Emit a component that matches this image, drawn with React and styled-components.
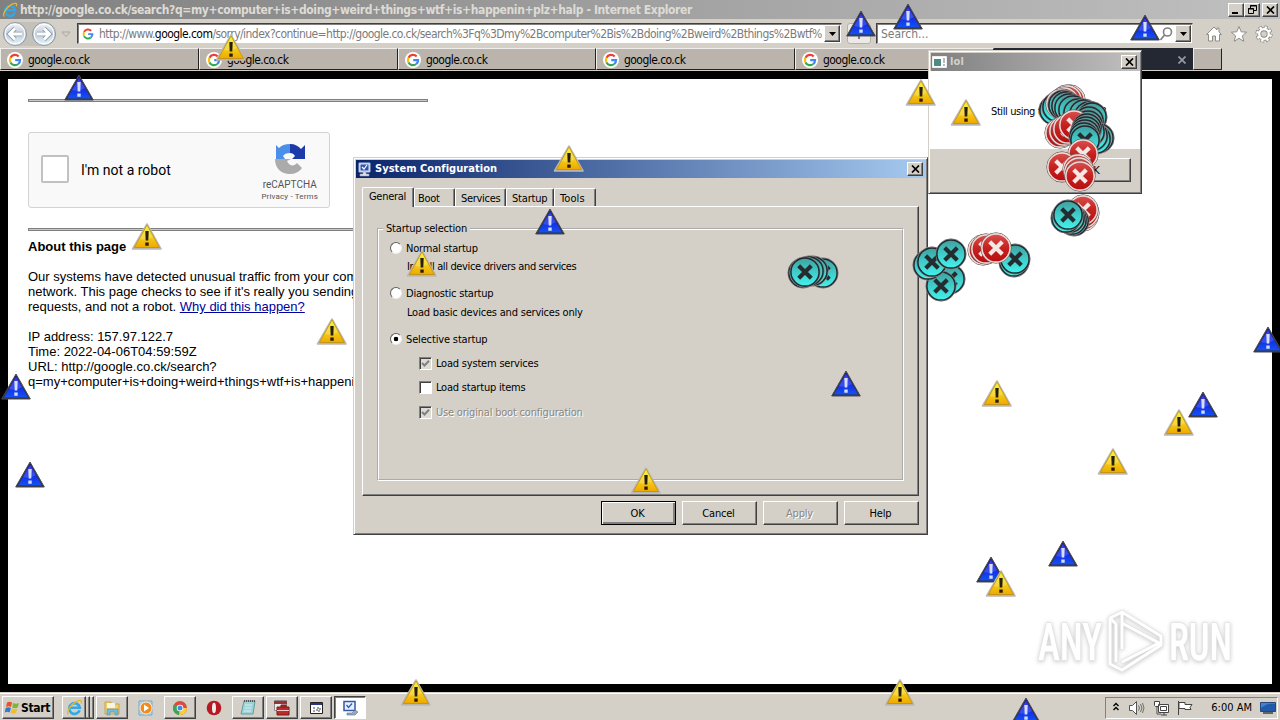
import styled, { createGlobalStyle, css } from "styled-components"

const GlobalStyle = createGlobalStyle`
  * { box-sizing: border-box; }
  body { margin: 0; overflow: hidden; }
  svg { flex: none; }
`

const ui = `"DejaVu Sans Condensed", "DejaVu Sans", sans-serif`

const raised = css`
  background: #d4d0c8;
  border: 1px solid;
  border-color: #fff #404040 #404040 #fff;
  box-shadow: inset -1px -1px 0 #808080;
`

const Screen = styled.div`
  position: relative;
  width: 1280px;
  height: 720px;
  overflow: hidden;
  display: flex;
  flex-direction: column;
  background: #000;
  color: #000;
  font-family: ${ui};
  font-stretch: condensed;
  font-size: 11px;
  line-height: 14px;
`

const Text = styled.span`
  white-space: pre;
  letter-spacing: ${p => p.$ls || 0}px;
  margin-left: ${p => p.$ml || 0}px;
`

/* browser */
const TitleBar = styled.div`
  height: 19px;
  flex: none;
  display: flex;
  align-items: center;
  gap: 2px;
  padding: 0 2px 0 2px;
  color: #dedbd5;
  font-size: 12px;
  font-weight: bold;
  background: linear-gradient(90deg, #808080, #c0c0c0);
`
const Spacer = styled.div`
  flex: 1;
`
const WinButton = styled.button`
  ${raised}
  width: 16px;
  height: 14px;
  flex: none;
  padding: 0;
  display: flex;
  align-items: center;
  justify-content: center;
  margin-left: ${p => p.$gap || 0}px;
`
const WinButtons = styled.div`
  display: flex;
`
const NavBar = styled.div`
  height: 29px;
  flex: none;
  display: flex;
  align-items: center;
  background: #d4d0c8;
  padding: 0 7px 0 2px;
`
const Field = styled.div`
  width: ${p => p.$w}px;
  height: 21px;
  flex: none;
  display: flex;
  align-items: center;
  background: #fff;
  border: 1px solid;
  border-color: #404040 #d4d0c8 #d4d0c8 #404040;
  box-shadow: inset 1px 1px 0 #808080;
  padding: 0 1px 0 3px;
  font-size: 12px;
  color: #7b7b7b;
  overflow: hidden;
  b { font-weight: normal; color: #000; }
`
const Drop = styled.button`
  ${raised}
  width: 16px;
  height: 17px;
  padding: 0;
  flex: none;
  display: flex;
  align-items: center;
  justify-content: center;
  margin-left: ${p => p.$ml || 0}px;
`
const RefreshBtn = styled.div`
  width: 24px;
  height: 21px;
  margin: 0 5px;
  border: 1px solid #b5b1aa;
  border-radius: 3px;
  background: #eceae6;
  display: flex;
  align-items: center;
  justify-content: center;
`
const NavIcons = styled.div`
  display: flex;
  gap: 7px;
  margin-left: 12px;
`
const TabRow = styled.div`
  height: 23px;
  flex: none;
  display: flex;
  background: #d4d0c8;
`
const BrowserTab = styled.div`
  width: ${p => p.$w || 199}px;
  height: 22px;
  flex: none;
  display: flex;
  align-items: center;
  justify-content: ${p => (p.$active ? "flex-end" : "flex-start")};
  gap: 5px;
  padding: 1px 6px 0;
  font-size: 12px;
  background: ${p => (p.$active ? "#242833" : "#bab4ac")};
  border: 1px solid;
  border-color: ${p => (p.$active ? "#242833" : "#f0eeea #222 #222 #f0eeea")};
`
const Page = styled.div`
  flex: 1;
  min-height: 0;
  border: 8px solid #000;
  background: #fff;
  padding: 20px;
  font-family: "Liberation Sans", Arial, sans-serif;
  font-stretch: normal;
  font-size: 13px;
  line-height: 15px;
`
const Rule = styled.div`
  width: 400px;
  height: 3px;
  border: 1px solid #808080;
  background: #c8c8c8;
`
const Captcha = styled.div`
  width: 302px;
  height: 76px;
  margin: 30px 0 20px;
  display: flex;
  align-items: center;
  padding: 0 11px 0 12px;
  background: #f9f9f9;
  border: 1px solid #d3d3d3;
  border-radius: 3px;
  font-family: Roboto, sans-serif;
  font-size: 14px;
`
const CaptchaBox = styled.div`
  width: 28px;
  height: 28px;
  margin: -2px 12px 0 0;
  border: 2px solid #c1c1c1;
  border-radius: 2px;
  background: #fff;
`
const CaptchaBrand = styled.div`
  display: flex;
  flex-direction: column;
  align-items: center;
  margin-left: auto;
  padding-top: 4px;
  color: #555;
  font-size: 10px;
  line-height: 12px;
  small { font-size: 8px; line-height: 11px; letter-spacing: 0.15px; }
  svg { margin-bottom: 4px; }
`
const Heading = styled.h2`
  margin: 8px 0 15px;
  font-size: 13px;
  line-height: 15px;
`
const Para = styled.p`
  margin: 0 0 15px;
  white-space: pre;
  a { color: #00009c; text-decoration: underline; }
`

/* windows */
const Window = styled.div`
  position: absolute;
  left: ${p => p.$x}px;
  top: ${p => p.$y}px;
  width: ${p => p.$w}px;
  height: ${p => p.$h}px;
  display: flex;
  flex-direction: column;
  padding: 1px;
  background: #d4d0c8;
  border: 1px solid;
  border-color: #d4d0c8 #404040 #404040 #d4d0c8;
  box-shadow: inset 1px 1px 0 #fff, inset -1px -1px 0 #808080;
`
const Caption = styled.div`
  height: 18px;
  flex: none;
  margin: 1px 0 0 1px;
  display: flex;
  align-items: center;
  gap: 3px;
  padding: 0 3px 0 1px;
  font-weight: bold;
  color: ${p => (p.$active ? "#fff" : "#d4d0c8")};
  background: ${p =>
    p.$active
      ? "linear-gradient(90deg, #0a246a, #a6caf0)"
      : "linear-gradient(90deg, #808080, #c0c0c0)"};
`
const Message = styled.div`
  height: 78px;
  display: flex;
  align-items: center;
  gap: 9px;
  padding: 3px 0 0 20px;
  background: #fff;
`
const PushButton = styled.button`
  ${raised}
  width: 75px;
  height: 24px;
  padding: 1px 2px 0 0;
  font: inherit;
  font-stretch: condensed;
  letter-spacing: -0.2px;
  color: ${p => (p.disabled ? "#8a8780" : "#000")};
  text-shadow: ${p => (p.disabled ? "1px 1px 0 #fff" : "none")};
  outline: ${p => (p.$default ? "1px solid #000" : "none")};
  outline-offset: -1px;
  ${p => p.$default && "box-shadow: inset 1px 1px 0 #fff, inset -2px -2px 0 #808080;"}
`
const MessageFooter = styled.div`
  flex: 1;
  display: flex;
  justify-content: flex-end;
  padding: 9px 9px 0 0;
`
const TabStrip = styled.div`
  display: flex;
  align-items: flex-end;
  height: 28px;
  flex: none;
  padding-left: 7px;
`
const DialogTab = styled.div`
  width: ${p => p.$w}px;
  height: ${p => (p.$active ? 20 : 18)}px;
  padding: ${p => (p.$active ? 2 : 3)}px 0 0 ${p => p.$pad || 5}px;
  border: 1px solid;
  border-width: 1px 1px 0;
  border-color: #fff #404040 #fff #fff;
  border-radius: 2px 2px 0 0;
  box-shadow: inset -1px 0 0 #808080;
  margin-bottom: ${p => (p.$active ? -1 : 0)}px;
  background: #d4d0c8;
  position: relative;
`
const TabPanel = styled.div`
  ${raised}
  height: 290px;
  flex: none;
  margin: 0 7px 0 7px;
  padding: 15px 14px 15px;
`
const Group = styled.fieldset`
  height: 259px;
  margin: 0;
  min-width: 0;
  padding: 0 0 0 11px;
  border: 2px groove #fff;
  legend { padding: 0 3px; margin-left: -7px; }
`
const Option = styled.label`
  display: flex;
  align-items: center;
  gap: 4px;
  height: 14px;
  margin: ${p => p.$top}px 0 0 ${p => p.$indent || 0}px;
  color: ${p => (p.$disabled ? "#8a8780" : "#000")};
  text-shadow: ${p => (p.$disabled ? "1px 1px 0 #fff" : "none")};
`
const Radio = styled.span`
  width: 12px;
  height: 12px;
  margin-bottom: 3px;
  border-radius: 50%;
  border: 1px solid;
  border-color: #606060 #eee #eee #606060;
  background: ${p => (p.$on ? "radial-gradient(circle, #000 2px, #fff 2.6px)" : "#fff")};
`
const Check = styled.span`
  width: 13px;
  height: 13px;
  margin-bottom: 2px;
  border: 1px solid;
  border-color: #808080 #fff #fff #808080;
  box-shadow: inset 1px 1px 0 #404040;
  background: ${p => (p.$grey ? "#dedbd5" : "#fff")};
  display: flex;
  align-items: center;
  justify-content: center;
`
const Buttons = styled.div`
  display: flex;
  justify-content: flex-end;
  gap: 6px;
  padding: 5px 7px 0 0;
`

/* taskbar */
const Taskbar = styled.div`
  height: 28px;
  flex: none;
  display: flex;
  align-items: center;
  padding: 2px 2px 0;
  background: #d4d0c8;
  border-top: 1px solid #d4d0c8;
  box-shadow: inset 0 1px 0 #fff;
`
const StartButton = styled.div`
  ${raised}
  width: 52px;
  height: 23px;
  display: flex;
  align-items: center;
  gap: 1px;
  padding-left: 1px;
  font-size: 12px;
  font-weight: bold;
  margin-right: 8px;
`
const TaskItem = styled.div`
  width: 32px;
  height: 23px;
  margin-right: 2px;
  display: flex;
  align-items: center;
  justify-content: center;
  ${p => !p.$flat && raised}
  ${p =>
    p.$active &&
    "background: #fff; border-color: #404040 #fff #fff #404040; box-shadow: inset 1px 1px 0 #808080;"}
`
const Stack = styled.div`
  display: flex;
  margin-right: 2px;
  i { ${raised} width: 4px; height: 23px; border-left: 0; }
  & > div { width: 24px; margin: 0; }
`
const Tray = styled.div`
  width: 173px;
  height: 22px;
  margin-left: auto;
  display: flex;
  align-items: center;
  gap: 8px;
  padding: 0 1px 0 6px;
  border: 1px solid;
  border-color: #808080 #fff #fff #808080;
`

/* error icons scattered over the desktop */
const Stamp = styled.svg`
  position: absolute;
  left: ${p => p.$x}px;
  top: ${p => p.$y}px;
  pointer-events: none;
`
const Watermark = styled.svg`
  position: absolute;
  left: 1030px;
  top: 604px;
  filter: drop-shadow(0 1px 2px #c8c8c8);
`

function CloseGlyph() {
  return (
    <svg width="9" height="8" viewBox="0 0 9 8">
      <path d="M1 .5 8 7.5M8 .5 1 7.5" stroke="#000" strokeWidth="1.7" />
    </svg>
  )
}

function Arrow() {
  return (
    <svg width="7" height="4"><path d="M0 0h7L3.5 4z" /></svg>
  )
}

function GoogleG({ size = 16 }) {
  return (
    <svg width={size} height={size} viewBox="0 0 16 16">
      <circle cx="8" cy="8" r="8" fill="#fff" />
      <g fill="none" strokeWidth="2.2">
        <path d="M11.7 4.4A5.1 5.1 0 0 0 3.5 5.7" stroke="#ea4335" />
        <path d="M3.5 5.7a5.1 5.1 0 0 0 0 4.7" stroke="#fbbc05" />
        <path d="M3.5 10.4a5.1 5.1 0 0 0 7.8 1.6" stroke="#34a853" />
        <path d="M11.3 12a5 5 0 0 0 1.8-3.9H8.2" stroke="#4285f4" />
      </g>
    </svg>
  )
}

function IeLogo({ size = 16 }) {
  return (
    <svg width={size} height={size} viewBox="0 0 16 16" fill="none">
      <path d="M12.8 10.6A5 5 0 1 1 13 8.2H4.2" stroke="#35a7e4" strokeWidth="2.5" />
      <path d="M2.3 14.5C-.2 12.5 4.5 5 10 2.2c3.5-1.7 5.6-1 4.2 2" stroke="#e8b923" strokeWidth="1.3" />
    </svg>
  )
}

function NavArrows() {
  return (
    <svg width="75" height="28" viewBox="0 0 75 28">
      <defs>
        <linearGradient id="orb" x1="0" y1="0" x2="0" y2="1">
          <stop offset="0" stopColor="#f4f5f6" />
          <stop offset=".5" stopColor="#c3ced8" />
          <stop offset="1" stopColor="#e6f5fd" />
        </linearGradient>
      </defs>
      <path d="M13 2h29a12 12 0 0 1 0 24H13z" fill="#c4c1bb" />
      {[13, 42].map(x => (
        <g key={x}>
          <circle cx={x} cy="14" r="11.5" fill="url(#orb)" stroke="#8c979f" />
          <circle cx={x} cy="14" r="9.8" fill="none" stroke="#fff" />
        </g>
      ))}
      <g fill="none" stroke="#8fa0b0" strokeWidth="4.6">
        <path d="M20 14H8M13 8.5 7.5 14l5.5 5.5M35 14h12M42 8.5l5.5 5.5-5.5 5.5" />
      </g>
      <g fill="none" stroke="#fff" strokeWidth="2.8">
        <path d="M20 14H8M13 8.5 7.5 14l5.5 5.5M35 14h12M42 8.5l5.5 5.5-5.5 5.5" />
      </g>
      <path d="M60 12h8l-4 4.5z" fill="#d4d0c8" stroke="#aaa79d" />
    </svg>
  )
}

function Monitor() {
  return (
    <svg width="15" height="15" viewBox="0 0 15 15">
      <path d="M2 1h11v9H2z" fill="#dfe7f5" stroke="#b4c0dc" />
      <path d="M3.5 2.5h8v6h-8z" fill="#2b55b5" />
      <path d="m5 5 2 2 3-4" fill="none" stroke="#fff" strokeWidth="1.2" />
      <path d="M6 10h3v2h3v2H3v-2h3z" fill="#dde1ea" stroke="#9aa3b5" strokeWidth=".6" />
    </svg>
  )
}

function Warn({ x, y, inline }) {
  const body = (
    <>
      <path d="M16 2 30 27H1.5z" fill="#aaa" stroke="#bdb9b2" strokeWidth="1.6" strokeLinejoin="round" />
      <path d="M16 3 28.5 25.5H3.3z" fill="url(#yellow)" stroke="#c08c00" strokeWidth=".7" />
      <path d="M16 4 22 15q-6 4-13 2z" fill="#fff" opacity=".22" />
      <path d="M14.3 9h3.4l-.4 9.500h-2.600zM14.300 20.500h3.400v3.200h-3.400z" fill="#261e08" />
    </>
  )
  if (inline) return <svg width="32" height="28" viewBox="0 0 32 28">{body}</svg>
  return <Stamp $x={x - 16} $y={y - 1} width="32" height="29">{body}</Stamp>
}

function BlueWarn({ x, y }) {
  return (
    <Stamp $x={x - 16} $y={y - 2} width="32" height="29">
      <path d="M16 2 30.3 27H1.7z" fill="#303038" stroke="#4a4a52" strokeWidth="1" strokeLinejoin="round" />
      <path d="M16 4 28 25.5H4z" fill="url(#blue)" />
      <path d="M16 5 22 15q-6 4-13 2z" fill="#fff" opacity=".15" />
      <path d="M14.3 9h3.4l-.4 9.5h-2.600zM14.300 20.500h3.400v3.200h-3.400z" fill="#d5defc" />
    </Stamp>
  )
}

function Cross({ x, y, red }) {
  return (
    <Stamp $x={x - 16} $y={y - 16} width="32" height="32">
      <circle cx="16" cy="16" r="15.200" fill="none" stroke={red ? "#6d6565" : "#8d8383"} strokeWidth="1" />
      <circle cx="16" cy="16" r="14.100" fill={red ? "url(#red)" : "url(#teal)"} stroke={red ? "#eed9d6" : "#202a30"} strokeWidth="1.500" />
      <path d="m9.700 9.700 12.600 12.600M22.300 9.700 9.700 22.300" stroke={red ? "#f6e6e4" : "#252c30"} strokeWidth="4.200" />
    </Stamp>
  )
}

const warns = [
  [231, 34], [569, 145], [147, 223], [422, 250], [332, 318], [921, 79], [997, 380],
  [1179, 409], [1113, 448], [646, 467], [416, 679], [900, 679],
]
const blues = [
  [79, 75], [861, 11], [908, 4], [1145, 15], [550, 209], [16, 374], [30, 462],
  [846, 371], [1268, 327], [1203, 392], [1063, 541], [991, 557], [1026, 698],
]
const crosses = [
  [1054, 110], [1057, 107],
  [1070, 100, 1], [1067, 100, 1], [1064, 102, 1], [1061, 104, 1],
  [1063, 105], [1066, 106], [1069, 108], [1073, 110], [1078, 113], [1084, 114], [1089, 116], [1092, 117], [1089, 121], [1088, 125],
  [1060, 133, 1], [1064, 131, 1], [1068, 129, 1], [1074, 125, 1],
  [1099, 138], [1096, 139], [1093, 136], [1090, 132], [1087, 128], [1086, 131], [1085, 134], [1084, 137], [1085, 140],
  [1083, 154, 1], [1062, 167, 1], [1078, 169, 1], [1079, 172, 1], [1080, 176, 1],
  [1083, 216, 1], [1084, 213, 1], [1083, 210, 1],
  [1074, 221], [1072, 220], [1070, 218], [1066, 218], [1068, 215],
  [823, 273], [813, 271], [809, 271], [803, 273], [805, 272],
  [950, 279], [941, 286], [928, 265], [932, 262], [951, 254],
  [1014, 262], [1015, 259], [983, 250, 1], [986, 249, 1], [996, 248, 1],
]

function Browser() {
  return (
    <>
      <TitleBar>
        <IeLogo />
        <Text $ls={-0.39}>http://google.co.ck/search?q=my+computer+is+doing+weird+things+wtf+is+happenin+plz+halp - Internet Explorer</Text>
        <Spacer />
        <WinButtons>
          <WinButton><svg width="8" height="8"><path d="M0 6h6v2H0z" /></svg></WinButton>
          <WinButton>
            <svg width="9" height="9" fill="none" stroke="#000">
              <path d="M2.5 3V.5h6v5H6M2 1h7M.5 3.5h5v5h-5zM0 4h6" />
            </svg>
          </WinButton>
          <WinButton $gap={2}><CloseGlyph /></WinButton>
        </WinButtons>
      </TitleBar>
      <NavBar>
        <NavArrows />
        <Field $w={765}>
          <GoogleG size={14} />
          <Text $ls={-0.55} $ml={4}>http://www.<b>google.com</b>/sorry/index?continue=http://google.co.ck/search%3Fq%3Dmy%2Bcomputer%2Bis%2Bdoing%2Bweird%2Bthings%2Bwtf%</Text>
          <Spacer />
          <Drop><Arrow /></Drop>
        </Field>
        <RefreshBtn><svg width="12" height="12"><path d="M2 3l4 5 4-5M6 8v3" fill="none" stroke="#555" strokeWidth="1.5" /></svg></RefreshBtn>
        <Field $w={317}>
          <Text $ml={1}>Search...</Text>
          <Spacer />
          <svg width="13" height="14" fill="none" stroke="#808080" strokeWidth="1.6">
            <circle cx="7.5" cy="5" r="4" /><path d="m4.5 8-4 5" />
          </svg>
          <Drop $ml={2}><Arrow /></Drop>
        </Field>
        <NavIcons>
          <svg width="18" height="20" viewBox="0 0 18 18" fill="#fff" stroke="#908d87">
            <path d="M9 2 1.5 9.5h2V16h4v-5h3v5h4V9.500h2L14 7V3h-2v2z" />
          </svg>
          <svg width="18" height="20" viewBox="0 0 18 18" fill="#fff" stroke="#908d87">
            <path d="m9 1.500 2.200 5.300 5.500.4-4.300 3.600 1.400 5.500L9 13.300l-4.800 3 1.400-5.500L1.300 7.200l5.500-.4z" />
          </svg>
          <svg width="18" height="20" viewBox="0 0 18 18" fill="none">
            <circle cx="9" cy="9" r="6.800" stroke="#8a8781" strokeWidth="3.600" strokeDasharray="3.300 2.040" />
            <circle cx="9" cy="9" r="4.800" stroke="#8a8781" strokeWidth="4" />
            <circle cx="9" cy="9" r="6.600" stroke="#fff" strokeWidth="2.600" strokeDasharray="2.300 2.880" strokeDashoffset="-.4" />
            <circle cx="9" cy="9" r="4.800" stroke="#fff" strokeWidth="2.300" />
          </svg>
        </NavIcons>
      </NavBar>
      <TabRow>
        {[0, 1, 2, 3, 4].map(i => (
          <BrowserTab key={i} $w={i === 2 ? 198 : 199}>
            <GoogleG size={16} />
            <Text $ls={-0.55}>google.co.ck</Text>
          </BrowserTab>
        ))}
        <BrowserTab $active>
          <svg width="8" height="8"><path d="m.5.5 7 7m0-7-7 7" stroke="#989aa0" strokeWidth="1.7" /></svg>
        </BrowserTab>
        <BrowserTab $w={29} />
      </TabRow>
      <Page>
        <Rule />
        <Captcha>
          <CaptchaBox />
          <Text>I'm not a robot</Text>
          <CaptchaBrand>
            <svg width="32" height="32" viewBox="0 0 32 32">
              <path d="M16 1C11 1 7.500 2.500 5 5L2 2v14h9l-2-3c1-2 4-3 7-3z" fill="#4a90e8" />
              <path d="M16 1c5 0 8.500 2 11 5l4-4v14H18l3-3c-1-2-3-3-5-3z" fill="#1c3aa9" />
              <path d="M1 16c0 9 6 15 15 15 5 0 9-2 12-6l-5-5c-3 4-8 3-10-2l4-2z" fill="#ababab" />
            </svg>
            reCAPTCHA
            <small>Privacy - Terms</small>
          </CaptchaBrand>
        </Captcha>
        <Rule />
        <Heading>About this page</Heading>
        <Para>
          {"Our systems have detected unusual traffic from your computer\nnetwork. This page checks to see if it's really you sending the\nrequests, and not a robot. "}
          <a>Why did this happen?</a>
        </Para>
        <Para>
          {"IP address: 157.97.122.7\nTime: 2022-04-06T04:59:59Z\nURL: http://google.co.ck/search?\nq=my+computer+is+doing+weird+things+wtf+is+happenin"}
        </Para>
      </Page>
    </>
  )
}

function LolDialog() {
  return (
    <Window $x={928} $y={50} $w={214} $h={144}>
      <Caption>
        <svg width="15" height="12">
          <path d="M.5.5h14v11H.5z" fill="#fff" stroke="#eee" />
          <path d="M2 3h7v7H2z" fill="#4d8b84" />
          <path d="M12 2v5M12 8v2" stroke="#777" />
        </svg>
        <Text $ls={0.2}>lol</Text>
        <Spacer />
        <WinButton><CloseGlyph /></WinButton>
      </Caption>
      <Message>
        <Warn inline />
        <Text $ls={-0.4}>Still using this computer?</Text>
      </Message>
      <MessageFooter>
        <PushButton>OK</PushButton>
      </MessageFooter>
    </Window>
  )
}

function Tick({ on }) {
  return (
    <Check $grey={on}>
      {on && <svg width="9" height="9"><path d="m1 4 2.500 2.500L8 1.800" fill="none" stroke="#808080" strokeWidth="2" /></svg>}
    </Check>
  )
}

function ConfigDialog() {
  return (
    <Window $x={353} $y={157} $w={575} $h={378}>
      <Caption $active>
        <Monitor />
        <Text $ls={0.05}>System Configuration</Text>
        <Spacer />
        <WinButton><CloseGlyph /></WinButton>
      </Caption>
      <TabStrip>
        <DialogTab $w={52} $pad={6} $active><Text $ls={-0.3}>General</Text></DialogTab>
        <DialogTab $w={41} $pad={3}><Text $ls={-0.3}>Boot</Text></DialogTab>
        <DialogTab $w={51}><Text $ls={-0.3}>Services</Text></DialogTab>
        <DialogTab $w={48}><Text $ls={-0.2}>Startup</Text></DialogTab>
        <DialogTab $w={42}><Text $ls={0.1}>Tools</Text></DialogTab>
      </TabStrip>
      <TabPanel>
        <Group>
          <legend><Text $ls={-0.2}>Startup selection</Text></legend>
          <Option $top={6}><Radio /><Text $ls={-0.2}>Normal startup</Text></Option>
          <Option $top={4} $indent={17}><Text $ls={-0.35}>Install all device drivers and services</Text></Option>
          <Option $top={13}><Radio /><Text $ls={-0.2}>Diagnostic startup</Text></Option>
          <Option $top={5} $indent={17}><Text $ls={-0.2}>Load basic devices and services only</Text></Option>
          <Option $top={13}><Radio $on /><Text $ls={-0.15}>Selective startup</Text></Option>
          <Option $top={10} $indent={29}><Tick on /><Text $ls={-0.2}>Load system services</Text></Option>
          <Option $top={10} $indent={29}><Tick /><Text $ls={-0.2}>Load startup items</Text></Option>
          <Option $top={11} $indent={29} $disabled><Tick on /><Text $ls={-0.2}>Use original boot configuration</Text></Option>
        </Group>
      </TabPanel>
      <Buttons>
        <PushButton $default>OK</PushButton>
        <PushButton>Cancel</PushButton>
        <PushButton disabled>Apply</PushButton>
        <PushButton>Help</PushButton>
      </Buttons>
    </Window>
  )
}

function WindowsFlag() {
  return (
    <svg width="16" height="16" viewBox="0 0 16 16">
      <path d="M3 2.500c2-1 3-1 5 0L7 7C5 6 4 6 2 7z" fill="#e5542a" />
      <path d="M9 3c2 1 4 1 6 0l-1.300 4.500c-2 1-3.700 1-5.500 0z" fill="#7fb539" />
      <path d="M1.700 8c2-1 3.500-1 5.200 0l-1.200 4.500c-2-1-3-1-5 0z" fill="#3577c9" />
      <path d="M7.900 8.500c2 1 3.700 1 5.500 0L12 13c-2 1-3.500 1-5.300 0z" fill="#f2bd2a" />
    </svg>
  )
}

function TaskbarRow() {
  return (
    <Taskbar>
      <StartButton><WindowsFlag /><Text $ls={-0.35}>Start</Text></StartButton>
      <Stack><TaskItem><IeLogo size={17} /></TaskItem><i /><i /></Stack>
      <TaskItem>
        <svg width="17" height="16">
          <path d="M1 2h6l1 2h7v10H1z" fill="#efcf72" stroke="#c7a449" />
          <path d="M3 3h8v5H3z" fill="#f8f4df" />
          <path d="M3 15V9h11v6h-3v-3H6v3z" fill="#6fbbe4" stroke="#4a94be" strokeWidth=".6" />
        </svg>
      </TaskItem>
      <TaskItem $flat>
        <svg width="16" height="16">
          <path d="M1 1h13v14H1z" fill="#add6ee" stroke="#78a8c4" />
          <circle cx="8" cy="8" r="6" fill="#f38b1c" stroke="#fff0d8" />
          <path d="m6 4.500 5 3.500-5 3.500z" fill="#fff" />
        </svg>
      </TaskItem>
      <TaskItem>
        <svg width="16" height="16" viewBox="0 0 16 16">
          <circle cx="8" cy="8" r="7" fill="#dd4b3e" />
          <path d="M8 8 2 4.400A7 7 0 0 0 7 15z" fill="#3aa757" />
          <path d="M8 8h7a7 7 0 0 1-8 7z" fill="#f9cd3c" />
          <circle cx="8" cy="8" r="3.300" fill="#fff" /><circle cx="8" cy="8" r="2.500" fill="#4788e8" />
        </svg>
      </TaskItem>
      <TaskItem $flat>
        <svg width="16" height="16">
          <ellipse cx="8" cy="8" rx="7.300" ry="7.300" fill="#b71922" />
          <ellipse cx="8" cy="8" rx="2" ry="5.200" fill="#eee" />
        </svg>
      </TaskItem>
      <TaskItem>
        <svg width="17" height="17">
          <path d="M4 2h11l-2 13H1z" fill="#9ed4d8" stroke="#659b9f" />
          <path d="M4 2h11" stroke="#555" strokeWidth="2" strokeDasharray="1 1" />
          <path d="M5 6h7M4.500 9h7M4 12h7" stroke="#d7f0f0" />
        </svg>
      </TaskItem>
      <TaskItem>
        <svg width="18" height="17">
          <path d="M1.500 1.500h12v10h-12z" fill="#ececec" stroke="#8c8c8c" />
          <path d="M1 2h13v3H1z" fill="#9a3434" />
          <path d="M4 8h12v8H4zM8 8V6h5v2" fill="#bb2c2c" stroke="#7d1818" />
          <path d="M4 11.500h12" stroke="#f2c7c7" />
        </svg>
      </TaskItem>
      <TaskItem>
        <svg width="15" height="15">
          <path d="M1.500 2.500h12v11h-12z" fill="#fff" stroke="#222" />
          <path d="M2 4h11" stroke="#26368b" strokeWidth="2" />
          <path d="M5 7v5M8 8h3v3H8z" fill="none" stroke="#444" strokeDasharray="2 1" />
        </svg>
      </TaskItem>
      <TaskItem $active>
        <svg width="17" height="16">
          <path d="M2 1.500h11v9H2z" fill="#e8f1ff" stroke="#3557a8" strokeWidth="1.500" />
          <path d="m4.500 5 2 2.500L10 3.500" fill="none" stroke="#3059b4" strokeWidth="1.300" />
          <path d="M5 13h5l3-3 3 2-3 3H5z" fill="#98a8bb" stroke="#5d6f87" strokeWidth=".6" />
        </svg>
      </TaskItem>
      <Tray>
        <svg width="8" height="12" fill="none" stroke="#000" strokeWidth="1.4"><path d="m1.500 4 2.500-2.500L6.500 4M1.500 8 4 5.500 6.500 8" /></svg>
        <svg width="17" height="16" fill="#fff" stroke="#555">
          <path d="M1.500 5.500h3l4-4v13l-4-4h-3z" />
          <path d="M10.500 5.500q2 2.500 0 5M12.500 4q3 4 0 8M14.500 3q3 5 0 10" fill="none" strokeWidth=".8" />
        </svg>
        <svg width="16" height="16" fill="#fff" stroke="#444">
          <path d="M5.500 4.500h10v8h-10zM7.500 6.500h6v4h-6zM8 15h6M11 12v3M1.500 1.500h5v4l-1 1h-3l-1-1zM4 7v7h4" />
        </svg>
        <svg width="17" height="16" fill="#fff" stroke="#444">
          <path d="M1.500 1v14M2 2.500h6v2h7l-2 3 1 2H8v-1H2z" />
        </svg>
        <Spacer />
        <Text>6:00 AM</Text>
        <svg width="16" height="14">
          <path d="M.5 1.500h15v9H.5z" fill="#3f83d3" stroke="#24477c" />
          <path d="M1 7q6-5 14-4v7H1z" fill="#205aa8" />
          <path d="M3 12h10" stroke="#344" strokeWidth="1.5" />
        </svg>
      </Tray>
    </Taskbar>
  )
}

function Gradients() {
  return (
    <Stamp $x={0} $y={0} width="0" height="0">
      <defs>
        <linearGradient id="yellow" x1="0" y1="0" x2="0" y2="1">
          <stop offset="0" stopColor="#f4f000" /><stop offset=".6" stopColor="#f3c914" /><stop offset="1" stopColor="#f0a800" />
        </linearGradient>
        <linearGradient id="blue" x1="0" y1="0" x2="0" y2="1">
          <stop offset="0" stopColor="#1414d8" /><stop offset=".6" stopColor="#1432ea" /><stop offset="1" stopColor="#1252f2" />
        </linearGradient>
        <linearGradient id="red" x1="0" y1="0" x2="0" y2="1">
          <stop offset="0" stopColor="#d9504d" /><stop offset=".5" stopColor="#c5211f" /><stop offset="1" stopColor="#b80d10" />
        </linearGradient>
        <linearGradient id="teal" x1="0" y1="0" x2="0" y2="1">
          <stop offset="0" stopColor="#3fa09e" /><stop offset=".45" stopColor="#3fc9c6" /><stop offset="1" stopColor="#42f2ec" />
        </linearGradient>
      </defs>
    </Stamp>
  )
}

function App() {
  return (
    <Screen>
      <GlobalStyle />
      <Gradients />
      <Browser />
      <TaskbarRow />
      <Watermark width="220" height="76" fontFamily="Roboto" fontSize="52" fontWeight="500">
        <g fill="#fff" stroke="#e6e6e6" strokeWidth="2" paintOrder="stroke">
          <text x="8" y="56" textLength="64" lengthAdjust="spacingAndGlyphs">ANY</text>
          <text x="139" y="56" textLength="63" lengthAdjust="spacingAndGlyphs">RUN</text>
        </g>
        <g fill="none" strokeLinejoin="round">
          <path d="M92 8 131 32v9L92 66 80 60V14zM92 8v37M92 19l37 20L92 58M80 14l6 6v38" stroke="#e0e0e0" strokeWidth="4" />
          <path d="M92 8 131 32v9L92 66 80 60V14zM92 8v37M92 19l37 20L92 58M80 14l6 6v38" stroke="#fff" strokeWidth="2.8" />
        </g>
      </Watermark>
      <ConfigDialog />
      <LolDialog />
      {warns.map(([x, y]) => <Warn key={`${x}-${y}`} x={x} y={y} />)}
      {blues.map(([x, y]) => <BlueWarn key={`${x}-${y}`} x={x} y={y} />)}
      <Warn x={1001} y={570} />
      {crosses.map(([x, y, red], i) => <Cross key={i} x={x} y={y} red={red} />)}
    </Screen>
  )
}

export default App
